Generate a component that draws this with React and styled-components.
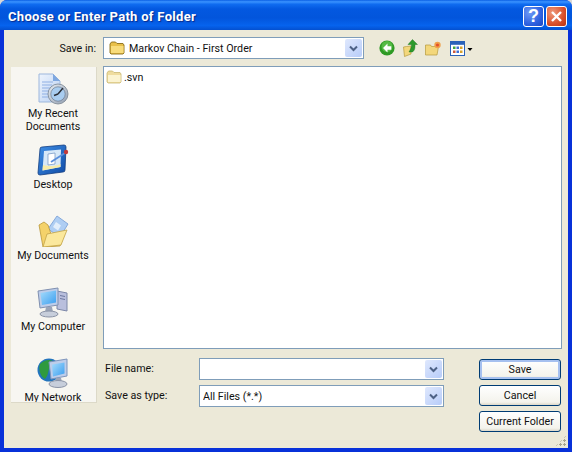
import React from "react";
import styled, { createGlobalStyle } from "styled-components";

const Global = createGlobalStyle`
  html, body { margin: 0; padding: 0; background: #d8d8d8; }
  * { box-sizing: border-box; }
`;
const UI = `Roboto, "Liberation Sans", Arial, sans-serif`;

const Win = styled.div`
  width: 572px; height: 452px; display: flex; flex-direction: column;
  background: #0831d9; border-radius: 7px 7px 0 0; overflow: hidden;
  font: 10.7px ${UI}; color: #111;
`;
const TitleBar = styled.div`
  height: 30px; flex: none; display: flex; align-items: center; padding: 3px 5px 0 8px;
  background: linear-gradient(180deg, #0a5fe4 0%, #3a93ff 6%, #0f6cf0 14%, #0358e0 30%, #0255dc 60%, #0663ee 85%, #0450d0 100%);
`;
const Title = styled.div`
  flex: 1; color: #fff; font: bold 13px Roboto, sans-serif; letter-spacing: .3px; text-shadow: 1px 1px 1px #0a2a8a; white-space: nowrap;
`;
const CapBtn = styled.div`
  width: 21px; height: 21px; margin-left: ${p => p.$ml || 0}px; border: 1px solid #fff; border-radius: 3px;
  display: flex; align-items: center; justify-content: center; color: #fff;
  background: ${p => p.$close
    ? "radial-gradient(circle at 30% 30%, #ef9a7c, #d9502b 60%, #b93310)"
    : "radial-gradient(circle at 30% 30%, #6f9af5, #2f62e0 60%, #1c46c4)"};
  font: bold 18px "Liberation Sans", sans-serif;
`;
const Body = styled.div`
  flex: 1; margin: 0 4px 4px 4px; background: #ece9d8; padding: 7px 6px 0 7px;
  display: flex; flex-direction: column; position: relative;
`;
const TopRow = styled.div`
  display: flex; align-items: center; height: 22px; margin-bottom: 7px;
`;
const SaveLabel = styled.div`
  width: 85px; text-align: right; margin-right: 7px;
`;
const Combo = styled.div`
  width: ${p => p.$w}px; height: ${p => p.$h || 22}px; background: #fff; border: 1px solid #7f9db9;
  display: flex; align-items: center; padding: 0 1px 0 ${p => p.$pad || 3}px; flex: none;
`;
const ComboText = styled.div`
  flex: 1; padding-left: ${p => p.$pl || 0}px; white-space: nowrap; overflow: hidden;
`;
const Drop = styled.div`
  width: 17px; height: 18px; border-radius: 2px; background: linear-gradient(135deg, #dfe8fd, #b7ccf9);
  display: flex; align-items: center; justify-content: center; flex: none;
`;
const Tools = styled.div`
  display: flex; align-items: center; margin-left: 15px; gap: 7.5px;
`;
const Main = styled.div`
  display: grid; grid-template-columns: 86px 459px; column-gap: 6px; align-items: start;
`;
const Sidebar = styled.div`
  margin-top: 1px; height: 336px; background: #f7f6f1; border-right: 1px solid #dcd9c8; border-bottom: 1px solid #dcd9c8;
  overflow: hidden; display: flex; flex-direction: column;
`;
const Place = styled.div`
  flex: none; height: 71px; padding: 6px 1px 0 0; display: flex; flex-direction: column; align-items: center;
  text-align: center; line-height: 13px;
  svg { flex: none; margin-bottom: 2px; }
`;
const Right = styled.div`
  display: flex; flex-direction: column;
`;
const List = styled.div`
  height: 283px; background: #fff; border: 1px solid #7f9db9; padding: 2px 1px;
`;
const FileItem = styled.div`
  display: flex; align-items: center; gap: 2px; height: 16px; padding-left: 1px;
`;
const FormArea = styled.div`
  display: grid; grid-template-columns: 96px 245px 35px 82px; margin-top: 9px; row-gap: 5px; align-items: start;
`;
const FormLabel = styled.div`
  padding-left: 2px; height: 22px; line-height: 22px;
`;
const Btn = styled.div`
  width: 82px; height: 21px; border: 1px solid #003c74; border-radius: 3px;
  background: linear-gradient(180deg, #fff, #f4f3ec 85%, #dcd8c8);
  display: flex; align-items: center; justify-content: center; white-space: nowrap;
  box-shadow: ${p => p.$def ? "inset 0 0 0 2px #a6c0ef" : "none"};
`;
const Col = styled.div`
  grid-column: 4; grid-row: 1 / span 3; display: flex; flex-direction: column; gap: 5px; margin-top: 1px;
`;
const Grip = styled.div`
  position: absolute; right: 1px; bottom: 1px; width: 12px; height: 12px;
  background-image: radial-gradient(circle at 1.5px 1.5px, #a8a48e 1.2px, transparent 1.3px);
  background-size: 4px 4px;
  clip-path: polygon(100% 0, 100% 100%, 0 100%);
`;

const Chevron = () => (
  <svg width="9" height="7" viewBox="0 0 9 7"><path d="M1 1.500 4.500 5 8 1.500" fill="none" stroke="#4d6185" strokeWidth="2"/></svg>
);
const ComboFolder = () => (
  <svg width="16" height="14" viewBox="0 0 16 14">
    <path d="M1 3 2.500 1H6.500L8 2.500H14l1 1.500v8l-1 1H2l-1-1z" fill="#e9c04a" stroke="#8a6d1a" strokeWidth=".9"/>
    <path d="M2 5h12.500v7H2z" fill="#f8dc7c"/>
  </svg>
);
const FileFolder = () => (
  <svg width="16" height="14" viewBox="0 0 16 14">
    <path d="M1 3 2.500 1H6.500L8 2.500H14l1 1.500v8l-1 1H2l-1-1z" fill="#efdc9e" stroke="#c9b873" strokeWidth=".8"/>
    <path d="M2 5h12.500v7H2z" fill="#fbf3d0"/>
  </svg>
);
const BackIcon = () => (
  <svg width="16" height="16" viewBox="0 0 16 16">
    <circle cx="8" cy="8" r="7.600" fill="#2f9a24"/><circle cx="8" cy="6.500" r="5.500" fill="#6fd05a" opacity=".6"/>
    <path d="M8.500 3.500 4 8l4.500 4.500V9.800h3.800V6.200H8.500z" fill="#fff"/>
  </svg>
);
const UpIcon = () => (
  <svg width="15" height="18" viewBox="0 0 15 18">
    <path d="M.5 8l3-.5L8 7v8l-6.500 2.500z" fill="#f3d77b" stroke="#b59a3c" strokeWidth=".7"/>
    <path d="M9.500.5 14.500 5.500H12C12 9 12 11 9.500 13L6 13c1-2 2.500-4 2.500-7.500H5z" fill="#2d9a2d" stroke="#156b15" strokeWidth=".4"/>
  </svg>
);
const NewFolderIcon = () => (
  <svg width="17" height="15" viewBox="0 0 17 15">
    <path d="M.5 4h5l1 1.500h7l-1.500 8.500H.5z" fill="#f3d77b" stroke="#b59a3c" strokeWidth=".7"/>
    <circle cx="12.500" cy="4" r="3.200" fill="#f0a04a"/><circle cx="12.500" cy="4" r="1.600" fill="#e4502b"/>
  </svg>
);
const ViewsIcon = () => (
  <svg width="23" height="15" viewBox="0 0 23 15">
    <rect x=".5" y=".5" width="14" height="14" fill="#fff" stroke="#2a62b8"/>
    <rect x="1" y="1" width="13" height="2.800" fill="#2a62b8"/>
    <rect x="3" y="5.500" width="2.500" height="2.500" fill="#3fa63f"/><rect x="6.500" y="5.500" width="2.500" height="2.500" fill="#3f6fd0"/><rect x="10" y="5.500" width="2.500" height="2.500" fill="#d8a22a"/>
    <rect x="3" y="9.500" width="2.500" height="2.500" fill="#d05a3a"/><rect x="6.500" y="9.500" width="2.500" height="2.500" fill="#3f6fd0"/><rect x="10" y="9.500" width="2.500" height="2.500" fill="#d8a22a"/>
    <path d="M17.500 7h5l-2.500 3z" fill="#000"/>
  </svg>
);
const RecentIcon = () => (
  <svg width="32" height="32" viewBox="0 0 32 32">
    <defs>
      <linearGradient id="rp" x1="0" y1="0" x2="1" y2="1"><stop offset="0" stopColor="#eef4fd"/><stop offset="1" stopColor="#b9d0f2"/></linearGradient>
      <linearGradient id="rc" x1="0" y1="0" x2="1" y2="1"><stop offset="0" stopColor="#e8eef5"/><stop offset="1" stopColor="#8f9cae"/></linearGradient>
    </defs>
    <path d="M2 1h14l7 7v21H2z" fill="url(#rp)" stroke="#9db7dc"/>
    <path d="M16 1l7 7h-7z" fill="#7fa8e0"/>
    <path d="M5 9h11M5 12h10M5 15h8M5 18h7M5 21h6M5 24h6" stroke="#8fb0e4" strokeWidth="1.200"/>
    <circle cx="21" cy="21" r="10" fill="url(#rc)" stroke="#77838f" strokeWidth=".8"/>
    <circle cx="21" cy="21" r="7.200" fill="#a9cdf0" stroke="#5f6d80" strokeWidth=".6"/>
    <path d="M21 21l5-6M21 21l-4 1.500" stroke="#2c3038" strokeWidth="1.500"/>
  </svg>
);
const DesktopIcon = () => (
  <svg width="32" height="32" viewBox="0 0 32 32">
    <defs>
      <linearGradient id="db" x1="0" y1="0" x2="1" y2="1"><stop offset="0" stopColor="#3f8fe6"/><stop offset="1" stopColor="#0f4ba6"/></linearGradient>
    </defs>
    <path d="M5 3 27 1q2 0 2 2l-1 23q0 2-2 2L3 31q-2 0-2-2L3 5q0-2 2-2z" fill="url(#db)" stroke="#123c80" strokeWidth=".8"/>
    <path d="M7 7 24 5.500 23.500 23 5.500 26.500z" fill="#d6e8f8"/>
    <path d="M6 21c5 1.500 12 1.500 17.500-1V23L5.500 26.500z" fill="#f6eca9"/>
    <path d="M11 10l7-1v11l-7 1z" fill="#fff" stroke="#6a8fc0" strokeWidth=".7"/>
    <path d="M14 18 28 9" stroke="#5a8fdc" strokeWidth="1.800"/><circle cx="29" cy="8" r="2.200" fill="#c23a3a"/>
  </svg>
);
const DocsIcon = () => (
  <svg width="32" height="32" viewBox="0 0 32 32">
    <path d="M11 14 20 1l11 8-8 13z" fill="#afcef3" stroke="#86aadb"/>
    <path d="M19 7l5 3.500-3 5-5-3.500z" fill="#e2eefb"/>
    <path d="M2 10l5-3 4 3 3 9 8 2 6-3-5 13L6 32z" fill="#f4d26a" stroke="#b9983b" strokeWidth=".8"/>
    <path d="M6 32 10 19 30 15l-6 15z" fill="#fbe89c" stroke="#c4a548" strokeWidth=".8"/>
  </svg>
);
const ComputerIcon = () => (
  <svg width="32" height="32" viewBox="0 0 32 32">
    <defs>
      <linearGradient id="cs" x1="0" y1="0" x2="1" y2="1"><stop offset="0" stopColor="#a7dcfb"/><stop offset="1" stopColor="#3a9ef0"/></linearGradient>
    </defs>
    <path d="M20 5l10 2v18l-10-2z" fill="#b9bfdd" stroke="#7d88a8"/>
    <path d="M23 9.500l5 1M23 12.500l5 1" stroke="#6d78a0"/>
    <path d="M1 5l20-3v17L3 22z" fill="#bdcdea" stroke="#8090b0"/>
    <path d="M3.500 7 19 4.500V16.500L5 19z" fill="url(#cs)"/>
    <path d="M9 21h6l1 5H8z" fill="#9aa4b8"/>
    <ellipse cx="12" cy="28" rx="9" ry="3" fill="#c7cedb" stroke="#8a93a6"/>
  </svg>
);
const NetworkIcon = () => (
  <svg width="32" height="32" viewBox="0 0 32 32">
    <defs>
      <linearGradient id="ns" x1="0" y1="0" x2="1" y2="1"><stop offset="0" stopColor="#a7dcfb"/><stop offset="1" stopColor="#3a9ef0"/></linearGradient>
    </defs>
    <circle cx="12" cy="13" r="11.500" fill="#2274bd"/>
    <path d="M3 7c4-4 9-5 13-3 1 4-3 5-4 8s-1 7-4 10c-4-2-7-9-5-15z" fill="#2f9a3f"/>
    <path d="M12 5l18-3v17l-16 3z" fill="#bdcdea" stroke="#7f95bb"/>
    <path d="M15 7.500l12.500-2v11l-11.500 3z" fill="url(#ns)"/>
    <path d="M19 21h5l1 4h-6z" fill="#9aa4b8"/>
    <ellipse cx="21" cy="27" rx="9" ry="3.500" fill="#c7cedb" stroke="#8a93a6"/>
  </svg>
);

const places = [
  { icon: <RecentIcon />, label: <>My Recent<br />Documents</> },
  { icon: <DesktopIcon />, label: "Desktop" },
  { icon: <DocsIcon />, label: "My Documents" },
  { icon: <ComputerIcon />, label: "My Computer" },
  { icon: <NetworkIcon />, label: "My Network" },
];

export default function App() {
  return (
    <>
      <Global />
      <Win>
        <TitleBar>
          <Title>Choose or Enter Path of Folder</Title>
          <CapBtn>?</CapBtn>
          <CapBtn $close $ml={2}>
            <svg width="13" height="13" viewBox="0 0 13 13"><path d="M2 2l9 9M11 2l-9 9" stroke="#fff" strokeWidth="2.400"/></svg>
          </CapBtn>
        </TitleBar>
        <Body>
          <TopRow>
            <SaveLabel>Save in:</SaveLabel>
            <Combo $w={261} $pad={5}>
              <ComboFolder />
              <ComboText $pl={4}>Markov Chain - First Order</ComboText>
              <Drop><Chevron /></Drop>
            </Combo>
            <Tools>
              <BackIcon /><UpIcon /><NewFolderIcon /><ViewsIcon />
            </Tools>
          </TopRow>
          <Main>
            <Sidebar>
              {places.map((p, i) => <Place key={i}>{p.icon}<div>{p.label}</div></Place>)}
            </Sidebar>
            <Right>
              <List>
                <FileItem><FileFolder />.svn</FileItem>
              </List>
              <FormArea>
                <FormLabel>File name:</FormLabel>
                <Combo $w={245}><ComboText /><Drop><Chevron /></Drop></Combo>
                <span />
                <Col>
                  <Btn $def>Save</Btn>
                  <Btn>Cancel</Btn>
                  <Btn>Current Folder</Btn>
                </Col>
                <FormLabel>Save as type:</FormLabel>
                <Combo $w={245}><ComboText>All Files (*.*)</ComboText><Drop><Chevron /></Drop></Combo>
              </FormArea>
            </Right>
          </Main>
          <Grip />
        </Body>
      </Win>
    </>
  );
}
